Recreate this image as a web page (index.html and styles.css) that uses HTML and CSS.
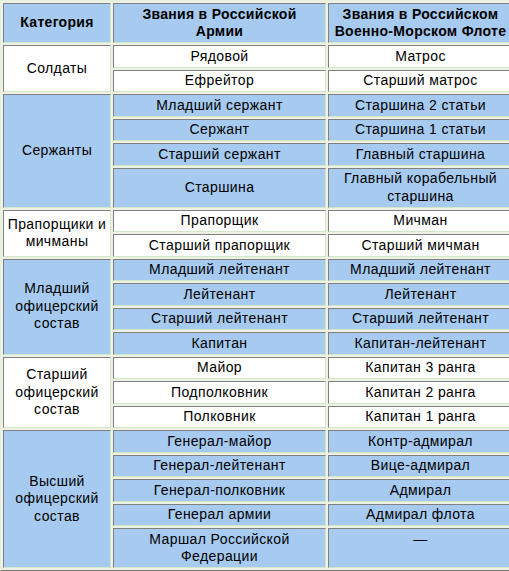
FILE: index.html
```html
<!DOCTYPE html>
<html>
<head>
<meta charset="utf-8">
<link rel="stylesheet" href="styles.css">
</head>
<body>
<table class="ranks">
  <colgroup>
    <col class="c1"><col class="c2"><col class="c3">
  </colgroup>
  <tr class="blue">
    <th>Категория</th>
    <th>Звания в Российской<br>Армии</th>
    <th>Звания в Российском<br>Военно-Морском Флоте</th>
  </tr>
  <tr class="white">
    <td rowspan="2">Солдаты</td>
    <td>Рядовой</td><td>Матрос</td>
  </tr>
  <tr class="white"><td>Ефрейтор</td><td>Старший матрос</td></tr>
  <tr class="blue">
    <td rowspan="4">Сержанты</td>
    <td>Младший сержант</td><td>Старшина 2 статьи</td>
  </tr>
  <tr class="blue"><td>Сержант</td><td>Старшина 1 статьи</td></tr>
  <tr class="blue"><td>Старший сержант</td><td>Главный старшина</td></tr>
  <tr class="blue"><td>Старшина</td><td>Главный корабельный старшина</td></tr>
  <tr class="white">
    <td rowspan="2">Прапорщики и мичманы</td>
    <td>Прапорщик</td><td>Мичман</td>
  </tr>
  <tr class="white"><td>Старший прапорщик</td><td>Старший мичман</td></tr>
  <tr class="blue">
    <td rowspan="4">Младший офицерский состав</td>
    <td>Младший лейтенант</td><td>Младший лейтенант</td>
  </tr>
  <tr class="blue"><td>Лейтенант</td><td>Лейтенант</td></tr>
  <tr class="blue"><td>Старший лейтенант</td><td>Старший лейтенант</td></tr>
  <tr class="blue"><td>Капитан</td><td>Капитан-лейтенант</td></tr>
  <tr class="white">
    <td rowspan="3">Старший офицерский состав</td>
    <td>Майор</td><td>Капитан 3 ранга</td>
  </tr>
  <tr class="white"><td>Подполковник</td><td>Капитан 2 ранга</td></tr>
  <tr class="white"><td>Полковник</td><td>Капитан 1 ранга</td></tr>
  <tr class="blue">
    <td rowspan="5">Высший офицерский состав</td>
    <td>Генерал-майор</td><td>Контр-адмирал</td>
  </tr>
  <tr class="blue"><td>Генерал-лейтенант</td><td>Вице-адмирал</td></tr>
  <tr class="blue"><td>Генерал-полковник</td><td>Адмирал</td></tr>
  <tr class="blue"><td>Генерал армии</td><td>Адмирал флота</td></tr>
  <tr class="blue"><td class="top">Маршал Российской Федерации</td><td class="top">—</td></tr>
</table>
</body>
</html>
```
FILE: styles.css
```css
html, body {
  margin: 0;
  padding: 0;
  background: #ffffff;
}
.ranks {
  width: 509px;
  border-collapse: separate;
  border-spacing: 2px;
  border-style: solid;
  border-width: 1px;
  border-color: #e6f0de #7a7a7a #7a7a7a #e6f0de;
  background: #eef2e4;
  font-family: "Liberation Sans", Arial, sans-serif;
  font-size: 14px;
  line-height: 17.5px;
  letter-spacing: 0.4px;
  color: #000;
  table-layout: fixed;
}
.c1 { width: 108px; }
.c2 { width: 213px; }
.c3 { width: 185px; }
.ranks th,
.ranks td {
  border-style: solid;
  border-width: 1px;
  border-color: #808080 #d2e6c8 #d2e6c8 #808080;
  padding: 1.5px 2px;
  text-align: center;
  vertical-align: middle;
}
.ranks th {
  font-weight: bold;
  letter-spacing: 0.3px;
  padding: 1.5px 2px;
}
.blue th,
.blue td { background: #a6caf0; }
.white td { background: #ffffff; }
.ranks td.top { vertical-align: top; }
```
